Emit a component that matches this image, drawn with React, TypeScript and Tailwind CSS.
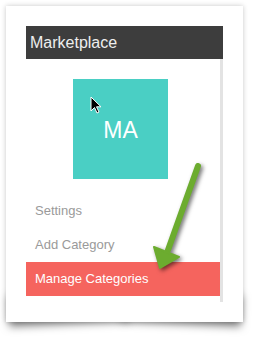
import React from "react";

const items = [
  { label: "Settings", active: false },
  { label: "Add Category", active: false },
  { label: "Manage Categories", active: true },
];

function Cursor() {
  return (
    <svg
      className="absolute left-[90px] top-[96px]"
      width="13"
      height="19"
      viewBox="0 0 13 19"
    >
      <path
        d="M1 1 L1 15 L4.5 11.5 L7 17 L9 16 L6.5 10.8 L11 10.8 Z"
        fill="#000"
        stroke="#fff"
        strokeWidth="1"
        strokeLinejoin="round"
      />
    </svg>
  );
}

function GreenArrow() {
  return (
    <svg
      className="absolute left-0 top-0 pointer-events-none"
      width="257"
      height="351"
      viewBox="0 0 257 351"
      style={{ filter: "drop-shadow(2px 2px 2px rgba(0,0,0,0.55))" }}
    >
      <line x1="198" y1="166" x2="168" y2="250" stroke="#6cac2f" strokeWidth="6" strokeLinecap="round" />
      <path d="M154 247 L179 257 L160 268 Z" fill="#6cac2f" stroke="#6cac2f" strokeWidth="2" strokeLinejoin="round" />
    </svg>
  );
}

export default function App() {
  return (
    <div className="relative w-[257px] h-[351px] bg-white overflow-hidden font-['Liberation_Sans',Arial,sans-serif]">
      <div className="relative ml-[6px] mt-[6px] w-[237px] h-[316px]">
        {/* lifted corner shadows under the card */}
        <div className="absolute left-[2px] bottom-[14px] w-[50%] h-[30px] shadow-[0_16px_9px_rgba(0,0,0,0.5)] -rotate-[2.5deg]" />
        <div className="absolute right-[2px] bottom-[14px] w-[50%] h-[30px] shadow-[0_16px_9px_rgba(0,0,0,0.5)] rotate-[2.5deg]" />

        <div className="relative h-full bg-white shadow-[0_0_5px_rgba(0,0,0,0.22)] pt-[20px] pl-[20px]">
          <div className="w-[197px]">
            <div className="h-[33px] bg-[#3d3d3d] pl-[4px] flex items-center text-[16px] text-[#eeeeee]">
              Marketplace
            </div>
            <div className="border-r-[3px] border-[#e3e3e3] pt-[20px] pb-[6px]">
              <div className="ml-[47px] w-[95px] h-[100px] bg-[#4acfc4] flex items-center justify-center text-[23px] text-white pt-[2px]">
                MA
              </div>
              <div className="mt-[15px] flex flex-col">
                {items.map((item) => (
                  <div
                    key={item.label}
                    className={
                      item.active
                        ? "h-[34px] pl-[9px] flex items-center text-[13px] bg-[#f5645e] text-white"
                        : "h-[34px] pl-[9px] flex items-center text-[13px] text-[#9a9a9a]"
                    }
                  >
                    {item.label}
                  </div>
                ))}
              </div>
            </div>
          </div>
        </div>
      </div>
      <Cursor />
      <GreenArrow />
    </div>
  );
}
